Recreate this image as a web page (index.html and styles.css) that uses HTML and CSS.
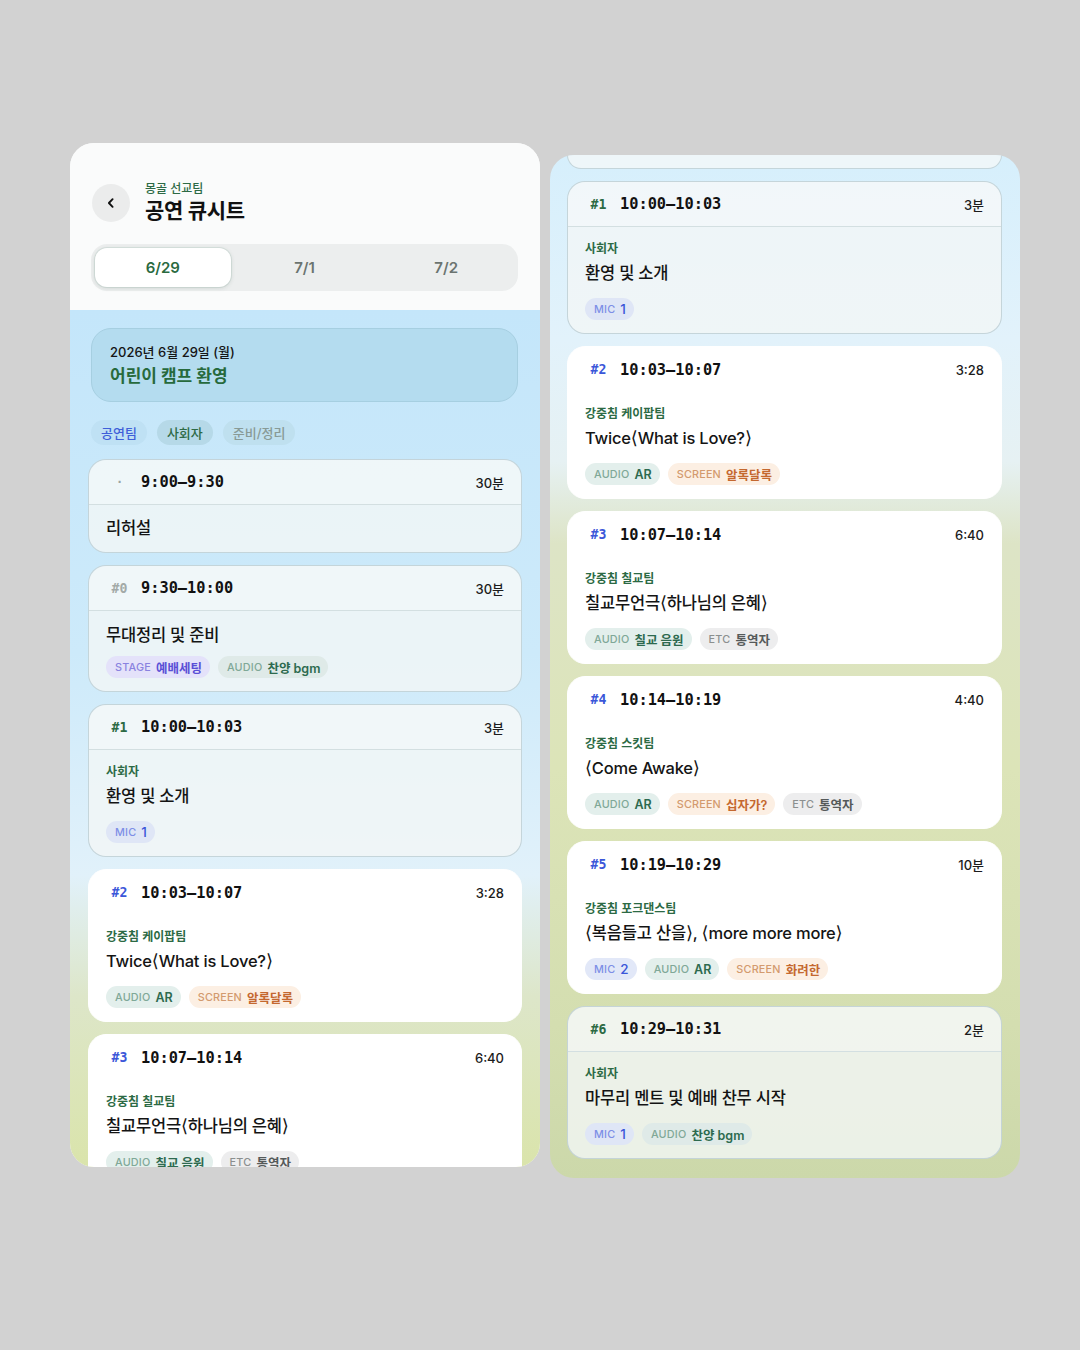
FILE: index.html
```html
<!DOCTYPE html>
<html lang="ko">
<head>
<meta charset="utf-8">
<title>공연 큐시트</title>
<link rel="stylesheet" href="styles.css">
</head>
<body>
<div class="stage">
  <section class="panel panel-left">
    <header class="top">
      <div class="title-row">
        <button class="back" aria-label="뒤로">
          <svg width="14" height="14" viewBox="0 0 14 14"><path d="M8.6 3.2 4.9 7l3.7 3.8" fill="none" stroke="#111" stroke-width="1.9" stroke-linecap="round" stroke-linejoin="round"/></svg>
        </button>
        <div class="titles">
          <div class="sub">몽골 선교팀</div>
          <h1 class="title">공연 큐시트</h1>
        </div>
      </div>
      <div class="seg">
        <div class="seg-item active">6/29</div>
        <div class="seg-item">7/1</div>
        <div class="seg-item">7/2</div>
      </div>
    </header>
    <div class="left-body">
      <div class="date-card">
        <div class="date">2026년 6월 29일 (월)</div>
        <div class="event">어린이 캠프 환영</div>
      </div>
      <div class="chips">
        <span class="chip chip-blue">공연팀</span>
        <span class="chip chip-green">사회자</span>
        <span class="chip chip-grey">준비/정리</span>
      </div>
      <div class="list">
        <article class="card past">
          <div class="card-head"><span class="num dot">·</span><span class="time">9:00–9:30</span><span class="dur">30분</span></div>
          <div class="card-body solo"><div class="name">리허설</div></div>
        </article>
        <article class="card past">
          <div class="card-head"><span class="num grey">#0</span><span class="time">9:30–10:00</span><span class="dur">30분</span></div>
          <div class="card-body no-team">
            <div class="name">무대정리 및 준비</div>
            <div class="tags">
              <span class="tag stage"><b>STAGE</b><i>예배세팅</i></span>
              <span class="tag audio"><b>AUDIO</b><i>찬양 bgm</i></span>
            </div>
          </div>
        </article>
        <article class="card past">
          <div class="card-head"><span class="num green">#1</span><span class="time">10:00–10:03</span><span class="dur">3분</span></div>
          <div class="card-body">
            <div class="team">사회자</div>
            <div class="name">환영 및 소개</div>
            <div class="tags"><span class="tag mic"><b>MIC</b><i>1</i></span></div>
          </div>
        </article>
        <article class="card live">
          <div class="card-head"><span class="num blue">#2</span><span class="time">10:03–10:07</span><span class="dur">3:28</span></div>
          <div class="card-body">
            <div class="team">강중침 케이팝팀</div>
            <div class="name">Twice<span class="br">⟨</span>What is Love?<span class="br">⟩</span></div>
            <div class="tags">
              <span class="tag audio"><b>AUDIO</b><i>AR</i></span>
              <span class="tag screen"><b>SCREEN</b><i>알록달록</i></span>
            </div>
          </div>
        </article>
        <article class="card live">
          <div class="card-head"><span class="num blue">#3</span><span class="time">10:07–10:14</span><span class="dur">6:40</span></div>
          <div class="card-body">
            <div class="team">강중침 칠교팀</div>
            <div class="name">칠교무언극<span class="br">⟨</span>하나님의 은혜<span class="br">⟩</span></div>
            <div class="tags">
              <span class="tag audio"><b>AUDIO</b><i>칠교 음원</i></span>
              <span class="tag etc"><b>ETC</b><i>통역자</i></span>
            </div>
          </div>
        </article>
      </div>
    </div>
  </section>

  <section class="panel panel-right">
    <div class="peek"></div>
    <div class="list">
      <article class="card past">
        <div class="card-head"><span class="num green">#1</span><span class="time">10:00–10:03</span><span class="dur">3분</span></div>
        <div class="card-body">
          <div class="team">사회자</div>
          <div class="name">환영 및 소개</div>
          <div class="tags"><span class="tag mic"><b>MIC</b><i>1</i></span></div>
        </div>
      </article>
      <article class="card live">
        <div class="card-head"><span class="num blue">#2</span><span class="time">10:03–10:07</span><span class="dur">3:28</span></div>
        <div class="card-body">
          <div class="team">강중침 케이팝팀</div>
          <div class="name">Twice<span class="br">⟨</span>What is Love?<span class="br">⟩</span></div>
          <div class="tags">
            <span class="tag audio"><b>AUDIO</b><i>AR</i></span>
            <span class="tag screen"><b>SCREEN</b><i>알록달록</i></span>
          </div>
        </div>
      </article>
      <article class="card live">
        <div class="card-head"><span class="num blue">#3</span><span class="time">10:07–10:14</span><span class="dur">6:40</span></div>
        <div class="card-body">
          <div class="team">강중침 칠교팀</div>
          <div class="name">칠교무언극<span class="br">⟨</span>하나님의 은혜<span class="br">⟩</span></div>
          <div class="tags">
            <span class="tag audio"><b>AUDIO</b><i>칠교 음원</i></span>
            <span class="tag etc"><b>ETC</b><i>통역자</i></span>
          </div>
        </div>
      </article>
      <article class="card live">
        <div class="card-head"><span class="num blue">#4</span><span class="time">10:14–10:19</span><span class="dur">4:40</span></div>
        <div class="card-body">
          <div class="team">강중침 스킷팀</div>
          <div class="name"><span class="br">⟨</span>Come Awake<span class="br">⟩</span></div>
          <div class="tags">
            <span class="tag audio"><b>AUDIO</b><i>AR</i></span>
            <span class="tag screen"><b>SCREEN</b><i>십자가?</i></span>
            <span class="tag etc"><b>ETC</b><i>통역자</i></span>
          </div>
        </div>
      </article>
      <article class="card live">
        <div class="card-head"><span class="num blue">#5</span><span class="time">10:19–10:29</span><span class="dur">10분</span></div>
        <div class="card-body">
          <div class="team">강중침 포크댄스팀</div>
          <div class="name"><span class="br">⟨</span>복음들고 산을<span class="br">⟩</span>, <span class="br">⟨</span>more more more<span class="br">⟩</span></div>
          <div class="tags">
            <span class="tag mic"><b>MIC</b><i>2</i></span>
            <span class="tag audio"><b>AUDIO</b><i>AR</i></span>
            <span class="tag screen"><b>SCREEN</b><i>화려한</i></span>
          </div>
        </div>
      </article>
      <article class="card past">
        <div class="card-head"><span class="num green">#6</span><span class="time">10:29–10:31</span><span class="dur">2분</span></div>
        <div class="card-body">
          <div class="team">사회자</div>
          <div class="name">마무리 멘트 및 예배 찬무 시작</div>
          <div class="tags">
            <span class="tag mic"><b>MIC</b><i>1</i></span>
            <span class="tag audio"><b>AUDIO</b><i>찬양 bgm</i></span>
          </div>
        </div>
      </article>
    </div>
  </section>
</div>
</body>
</html>
```

FILE: styles.css
```css
* { box-sizing: border-box; }
html, body { margin: 0; padding: 0; }
body {
  width: 1080px;
  height: 1350px;
  background: #d2d2d2;
  font-family: "Inter", "Noto Sans CJK KR", "Noto Sans", sans-serif;
  color: #151515;
  overflow: hidden;
}
.stage {
  display: flex;
  align-items: flex-start;
  gap: 10px;
  padding: 143px 0 0 70px;
}
.panel {
  width: 470px;
  border-radius: 24px;
  overflow: hidden;
}
.panel-left {
  height: 1024px;
  display: flex;
  flex-direction: column;
  background: #fafbfb;
}
.top {
  height: 167px;
  flex: none;
  padding: 38px 22px 0 21px;
  background: #fafbfb;
}
.title-row {
  display: flex;
  align-items: center;
  gap: 15px;
  padding-left: 1px;
}
.back {
  width: 38px;
  height: 38px;
  border-radius: 50%;
  border: 0;
  background: #ebecec;
  display: flex;
  align-items: center;
  justify-content: center;
  padding: 0;
}
.titles { display: flex; flex-direction: column; }
.sub {
  font-size: 12px;
  line-height: 16px;
  font-weight: 500;
  color: #2d6a45;
}
.title {
  margin: 0;
  font-size: 21px;
  line-height: 28px;
  font-weight: 700;
  color: #111;
  letter-spacing: -0.3px;
}
.seg {
  margin-top: 19px;
  height: 47px;
  border-radius: 16px;
  background: #eceeee;
  padding: 4px;
  display: grid;
  grid-template-columns: 1fr 1fr 1fr;
  column-gap: 6px;
}
.seg-item {
  display: flex;
  align-items: center;
  justify-content: center;
  font-size: 15px;
  font-weight: 600;
  color: #6b7470;
  border-radius: 12px;
}
.seg-item.active {
  background: #fff;
  color: #2a6a3f;
  box-shadow: 0 1px 4px rgba(60, 90, 80, 0.18), 0 0 0 1px rgba(200, 215, 210, 0.5);
}
.left-body {
  flex: 1;
  padding: 18px 18px 0 18px;
  background: linear-gradient(180deg, #c4e6fa 0%, #cdeafa 40%, #e1f1fa 66%, #dde6c9 80%, #dae4ab 100%);
  overflow: hidden;
}
.date-card {
  margin: 0 4px 0 3px;
  height: 74px;
  border-radius: 20px;
  background: #b4dcef;
  border: 1px solid #a6cfe1;
  padding: 0 18px;
  display: flex;
  flex-direction: column;
  justify-content: center;
}
.date {
  font-size: 13px;
  line-height: 18px;
  font-weight: 500;
  color: #151515;
}
.event {
  margin-top: 4px;
  font-size: 17px;
  line-height: 23px;
  font-weight: 700;
  color: #276a3c;
}
.chips {
  margin: 18px 0 0 3px;
  display: flex;
  gap: 10px;
}
.chip {
  height: 25px;
  padding: 0 10px;
  border-radius: 13px;
  display: flex;
  align-items: center;
  font-size: 13px;
  font-weight: 500;
}
.chip-blue { background: #bfe1f4; color: #3f5fd9; }
.chip-green { background: #b6d9e8; color: #2e6a45; }
.chip-grey { background: #bfe0ef; color: #889a96; }
.left-body .list { margin-top: 14px; }
.list {
  display: flex;
  flex-direction: column;
  gap: 12px;
}
.card {
  border-radius: 18px;
  flex: none;
}
.card.past {
  background: rgba(243, 246, 246, 0.8);
  border: 1px solid rgba(186, 204, 210, 0.8);
}
.card.live {
  background: #fff;
  border: 1px solid #fff;
}
.card-head {
  height: 45px;
  display: flex;
  align-items: center;
  padding: 0 17px 0 22px;
}
.card.past .card-head {
  border-bottom: 1px solid #d3dfe1;
  background: rgba(255, 255, 255, 0.25);
  border-radius: 18px 18px 0 0;
}
.num {
  font-family: "DejaVu Sans Mono", "Liberation Mono", monospace;
  font-weight: 700;
  font-size: 13.2px;
  min-width: 17px;
  text-align: center;
  margin-right: 13px;
}
.num.grey { color: #a3aaa8; }
.num.green { color: #2c6a44; }
.num.blue { color: #3b57d9; }
.num.dot { color: #9aa4a2; font-size: 12px; }
.time {
  font-family: "DejaVu Sans Mono", "Liberation Mono", monospace;
  font-weight: 700;
  font-size: 15.3px;
  color: #111;
}
.dur {
  margin-left: auto;
  font-size: 13px;
  font-weight: 500;
  color: #1c1c1c;
}
.card-body {
  padding: 14px 18px 13px 17px;
}
.card-body.solo { padding: 12px 18px 13px 17px; }
.card-body.no-team { padding-top: 13px; padding-bottom: 13px; }
.card-body.no-team .tags { margin-top: 10px; }
.team {
  font-size: 12px;
  line-height: 16px;
  font-weight: 600;
  color: #2c6a44;
  margin-bottom: 5px;
}
.name {
  height: 22px;
  font-size: 16.5px;
  line-height: 22px;
  font-weight: 500;
  color: #141414;
  letter-spacing: -0.2px;
  white-space: nowrap;
}
.br {
  font-family: "DejaVu Sans", "Noto Sans", sans-serif;
  font-weight: 400;
  font-size: 18px;
  line-height: 1;
}
.tags {
  margin-top: 14px;
  display: flex;
  gap: 8px;
}
.tag {
  height: 22px;
  border-radius: 11px;
  padding: 0 8px 0 9px;
  display: flex;
  align-items: center;
  gap: 5px;
  white-space: nowrap;
}
.tag b {
  font-size: 10.8px;
  font-weight: 500;
  letter-spacing: 0.2px;
}
.tag i {
  font-style: normal;
  font-size: 12.5px;
  font-weight: 600;
}
.tag.mic i { font-size: 13.5px; font-weight: 500; }
.tag.audio { background: #e3efec; }
.tag.audio b { color: #7fa897; }
.tag.audio i { color: #2d6a4f; }
.tag.screen { background: #fcefe3; }
.tag.screen b { color: #d39a6e; }
.tag.screen i { color: #c4682f; }
.tag.mic { background: #e2e8f8; }
.tag.mic b { color: #7d8fe6; }
.tag.mic i { color: #3b57d9; }
.tag.etc { background: #ededee; }
.tag.etc b { color: #8b8f8f; }
.tag.etc i { color: #555a5a; }
.tag.stage { background: #e4e2fa; }
.tag.stage b { color: #8a82e0; }
.tag.stage i { color: #5a4fd6; }
.card.past .tag.audio { background: #dfeae8; }
.card.past .tag.mic { background: #dfe6f6; }

.panel-right {
  height: 1023px;
  margin-top: 12px;
  padding: 0 18px 19px 17px;
  background: linear-gradient(180deg, #d6effc 0%, #e2f2fb 18%, #e6f1f3 30%, #dde4c6 38%, #dce4b8 60%, #d4deb0 85%, #ccd8aa 100%);
}
.peek {
  height: 14px;
  margin-bottom: 12px;
  border-radius: 0 0 18px 18px;
  background: rgba(244, 247, 247, 0.8);
  border: 1px solid rgba(186, 204, 210, 0.8);
  border-top: 0;
}
```
